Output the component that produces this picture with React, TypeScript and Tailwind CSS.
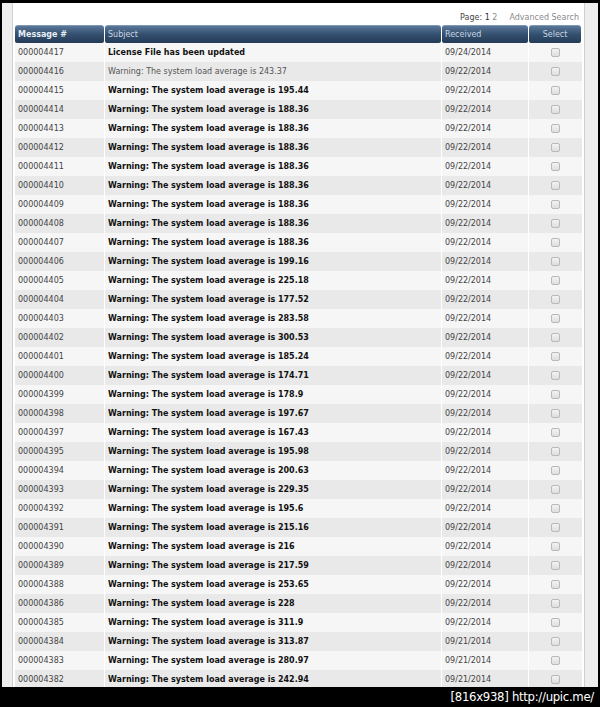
import React from 'react';

type Msg = { id: string; subject: string; date: string; bold: boolean };

const loads: [string, string, string][] = [
  ['000004415', '195.44', '09/22/2014'],
  ['000004414', '188.36', '09/22/2014'],
  ['000004413', '188.36', '09/22/2014'],
  ['000004412', '188.36', '09/22/2014'],
  ['000004411', '188.36', '09/22/2014'],
  ['000004410', '188.36', '09/22/2014'],
  ['000004409', '188.36', '09/22/2014'],
  ['000004408', '188.36', '09/22/2014'],
  ['000004407', '188.36', '09/22/2014'],
  ['000004406', '199.16', '09/22/2014'],
  ['000004405', '225.18', '09/22/2014'],
  ['000004404', '177.52', '09/22/2014'],
  ['000004403', '283.58', '09/22/2014'],
  ['000004402', '300.53', '09/22/2014'],
  ['000004401', '185.24', '09/22/2014'],
  ['000004400', '174.71', '09/22/2014'],
  ['000004399', '178.9', '09/22/2014'],
  ['000004398', '197.67', '09/22/2014'],
  ['000004397', '167.43', '09/22/2014'],
  ['000004395', '195.98', '09/22/2014'],
  ['000004394', '200.63', '09/22/2014'],
  ['000004393', '229.35', '09/22/2014'],
  ['000004392', '195.6', '09/22/2014'],
  ['000004391', '215.16', '09/22/2014'],
  ['000004390', '216', '09/22/2014'],
  ['000004389', '217.59', '09/22/2014'],
  ['000004388', '253.65', '09/22/2014'],
  ['000004386', '228', '09/22/2014'],
  ['000004385', '311.9', '09/22/2014'],
  ['000004384', '313.87', '09/21/2014'],
  ['000004383', '280.97', '09/21/2014'],
  ['000004382', '242.94', '09/21/2014'],
];

const messages: Msg[] = [
  { id: '000004417', subject: 'License File has been updated', date: '09/24/2014', bold: true },
  { id: '000004416', subject: 'Warning: The system load average is 243.37', date: '09/22/2014', bold: false },
  ...loads.map(([id, load, date]) => ({
    id,
    subject: `Warning: The system load average is ${load}`,
    date,
    bold: true,
  })),
];

const cols = 'grid grid-cols-[90px_337px_87px_53px]';

function HeaderCell({ children, className = '' }: { children: React.ReactNode; className?: string }) {
  return (
    <div
      className={`h-[18px] mr-px flex items-center px-[3px] rounded-t-[3px] rounded-b-[2px] bg-gradient-to-b from-[#5a7799] via-[#34506f] to-[#233b57] border-t border-[#7f98b6] ${className}`}
    >
      {children}
    </div>
  );
}

export default function App() {
  return (
    <div className="w-[600px] h-[707px] bg-black flex flex-col pt-[3px] font-['DejaVu_Sans',Verdana,sans-serif]">
      {/* Page frame */}
      <div className="h-[684px] mx-[2px] bg-[#eeeeee] flex pl-[10px] pr-[13px] overflow-hidden">
        <div className="flex-1 bg-white border-l border-r border-[#cfcfcf] pl-[2px]">
          {/* Paging + search */}
          <div className="h-[21px] flex items-end justify-end gap-[12px] pr-[5px] pb-[2px] text-[8px] leading-none">
            <span className="text-[#444]">
              Page: <span className="text-[#333]">1</span> <span className="text-[#8a8a8a]">2</span>
            </span>
            <span className="text-[#8a8a8a]">Advanced Search</span>
          </div>

          {/* Table */}
          <div className="w-[567px] pt-px">
            <div className={`${cols} text-[8px] leading-none`}>
              <HeaderCell className="font-bold text-[#e8eef5]">Message #</HeaderCell>
              <HeaderCell className="text-[#c9d6e5]">Subject</HeaderCell>
              <HeaderCell className="text-[#c9d6e5]">Received</HeaderCell>
              <HeaderCell className="text-[#c9d6e5] justify-center">Select</HeaderCell>
            </div>

            {messages.map((m, i) => (
              <div
                key={m.id}
                className={`${cols} h-[19px] text-[8px] leading-none ${i % 2 === 0 ? 'bg-[#f6f6f6]' : 'bg-[#e9e9e9]'}`}
              >
                <div className="flex items-center px-[3px] border-r border-white text-[#444]">{m.id}</div>
                <div
                  className={`flex items-center px-[3px] border-r border-white ${
                    m.bold ? 'font-bold text-[#111]' : 'text-[#555]'
                  }`}
                >
                  {m.subject}
                </div>
                <div className="flex items-center px-[3px] border-r border-white text-[#444]">{m.date}</div>
                <div className="flex items-center justify-center">
                  <span className="w-[9px] h-[9px] rounded-[2px] border border-[#b9b9b9] bg-gradient-to-b from-[#f3f3f3] to-[#dedede]" />
                </div>
              </div>
            ))}
          </div>
        </div>
      </div>

      {/* Footer watermark */}
      <div className="flex-1 flex items-center justify-end pr-[6px] text-white text-[13px] font-['DejaVu_Sans_Condensed','Liberation_Sans',sans-serif] tracking-[-0.3px]">
        [816x938] http://upic.me/
      </div>
    </div>
  );
}
